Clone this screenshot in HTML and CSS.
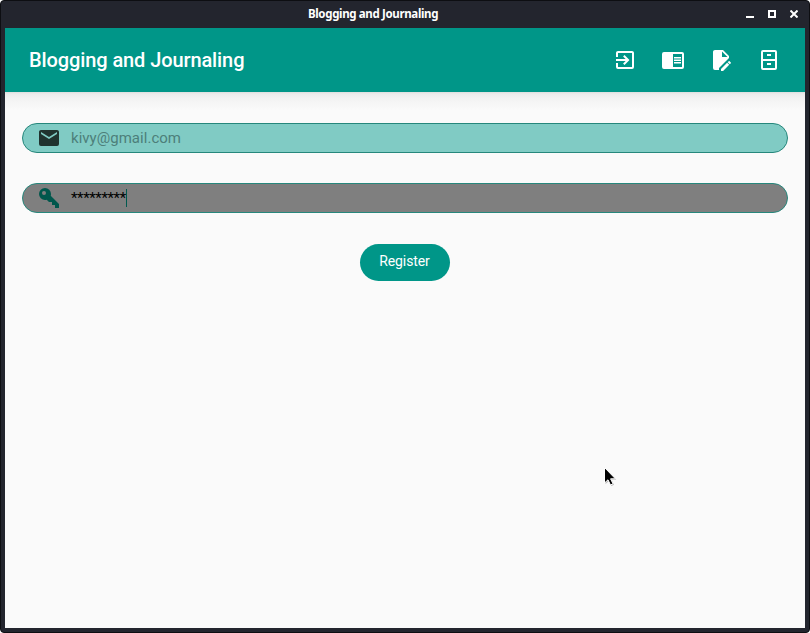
FILE: index.html
```
<!DOCTYPE html>
<html lang="en">
<head>
<meta charset="utf-8">
<title>Blogging and Journaling</title>
<link rel="stylesheet" href="styles.css">
</head>
<body>
<div class="window">
  <div class="titlebar">
    <span class="window-title">Blogging and Journaling</span>
    <div class="controls">
      <svg width="8" height="8" viewBox="0 0 8 8"><path d="M0 6h8v2H0z"/></svg>
      <svg width="8" height="8" viewBox="0 0 8 8"><path fill-rule="evenodd" d="M0 0h8v8H0zM2 2v4h4V2z"/></svg>
      <svg width="8" height="8" viewBox="0 0 8 8"><path d="M.5.5l7 7M7.5.5L.5 7.5" stroke="#fff" stroke-width="2"/></svg>
    </div>
  </div>
  <header class="toolbar">
    <h1>Blogging and Journaling</h1>
    <nav class="actions">
      <svg class="icon" viewBox="0 0 24 24"><path d="M19,3H5C3.89,3 3,3.89 3,5V9H5V5H19V19H5V15H3V19A2,2 0 0,0 5,21H19A2,2 0 0,0 21,19V5C21,3.89 20.1,3 19,3M10.08,15.58L11.5,17L16.5,12L11.5,7L10.08,8.41L12.67,11H3V13H12.67L10.08,15.58Z"/></svg>
      <svg class="icon" viewBox="0 0 24 24"><path fill-rule="evenodd" d="M3 4H21A2 2 0 0 1 23 6V19A2 2 0 0 1 21 21H3A2 2 0 0 1 1 19V6A2 2 0 0 1 3 4M12 6V19H21V6ZM13 9H20V10.5H13ZM13 11.5H20V13H13ZM13 14H20V15.5H13Z"/></svg>
      <svg class="icon" viewBox="0 0 24 24"><path d="M6,2C4.89,2 4,2.89 4,4V20A2,2 0 0,0 6,22H10V20.09L20,10.09V8L14,2H6M13,3.5L18.5,9H13V3.5M20.15,13C20,13 19.86,13.05 19.75,13.16L18.73,14.18L20.82,16.26L21.84,15.25C22.05,15.03 22.05,14.67 21.84,14.46L20.54,13.16C20.43,13.05 20.29,13 20.15,13M18.14,14.77L12,20.92V23H14.08L20.23,16.85L18.14,14.77Z"/></svg>
      <svg class="icon" viewBox="0 0 24 24"><path fill-rule="evenodd" d="M6 2H18A2 2 0 0 1 20 4V20A2 2 0 0 1 18 22H6A2 2 0 0 1 4 20V4A2 2 0 0 1 6 2M6 4V11H18V4ZM6 13V20H18V13ZM10 6H14V8H10ZM10 15H14V17H10Z"/></svg>
    </nav>
  </header>
  <main class="form">
    <div class="field email">
      <svg class="icon" viewBox="0 0 24 24"><path d="M20,8L12,13L4,8V6L12,11L20,6M20,4H4C2.89,4 2,4.89 2,6V18A2,2 0 0,0 4,20H20A2,2 0 0,0 22,18V6C22,4.89 21.1,4 20,4Z"/></svg>
      <span class="hint">kivy@gmail.com</span>
    </div>
    <div class="field password">
      <svg class="icon" viewBox="0 0 24 24"><path d="M22,19V22H18V19H15V16H12L9.74,13.74C9.19,13.91 8.61,14 8,14A6,6 0 0,1 2,8A6,6 0 0,1 8,2A6,6 0 0,1 14,8C14,8.61 13.91,9.19 13.74,9.74L22,18V19M7,5A2,2 0 0,0 5,7A2,2 0 0,0 7,9A2,2 0 0,0 9,7A2,2 0 0,0 7,5Z"/></svg>
      <span class="secret">*********</span><i class="caret"></i>
    </div>
    <button class="register">Register</button>
  </main>
  <svg class="pointer" width="14" height="22" viewBox="0 0 14 22"><path d="M2.5 2.5V18L5.9 14.9L8.5 20L11 18.8L8.6 13.8H13.2Z" fill="#777" opacity=".5"/><path d="M1.5 1.5V17L5 13.8L7.5 19L10 17.8L7.6 12.8H12.4Z" fill="#000" stroke="#fff" stroke-width="1"/></svg>
</div>
</body>
</html>
```
FILE: styles.css
```
* { box-sizing: border-box; }
body { margin: 0; background: #fff; font-family: Roboto, sans-serif; }
svg { display: block; flex: none; }
.window {
  position: relative;
  width: 810px;
  height: 633px;
  border: 1px solid #0d0e12;
  border-radius: 4px;
  background: #23252e;
  padding: 0 4px 4px;
  display: flex;
  flex-direction: column;
}
.titlebar {
  position: relative;
  height: 27px;
  flex: none;
  display: flex;
  align-items: center;
  justify-content: center;
}
.window-title {
  font: bold 11.5px/16px "Noto Sans", sans-serif;
  letter-spacing: -.35px;
  color: #fff;
  width: 130px;
  white-space: nowrap;
  margin: 0 64px 1px 0;
}
.controls {
  position: absolute;
  right: 7px;
  top: 9px;
  display: flex;
  gap: 14px;
  fill: #fff;
}
.toolbar {
  height: 64px;
  flex: none;
  background: #009688;
  display: flex;
  align-items: center;
  justify-content: space-between;
  padding: 0 24px;
}
h1 {
  margin: 0;
  font-size: 20px;
  line-height: 24px;
  font-weight: 500;
  letter-spacing: -.1px;
  color: #fff;
}
.actions { display: flex; gap: 24px; fill: #fff; }
.icon { width: 24px; height: 24px; }
.form {
  flex: 1;
  background: linear-gradient(#dedede 0, #ececec 2px, #f3f3f3 7px, #fafafa 18px);
  padding: 31px 17px 0;
  display: flex;
  flex-direction: column;
  align-items: center;
}
.field {
  width: 766px;
  height: 30px;
  flex: none;
  border: 1px solid #26877c;
  border-radius: 15px;
  display: flex;
  align-items: center;
  padding-left: 14px;
  margin-bottom: 30px;
  font-size: 15px;
  line-height: 18px;
}
.field .icon { margin-right: 10px; }
.email { background: #80cbc4; }
.email .icon { fill: #20332f; }
.hint { color: #4d7f7a; letter-spacing: .03px; }
.password { background: #7f7f7f; }
.password .icon { fill: #00574c; }
.secret { color: #000; letter-spacing: -.38px; }
.caret { width: 1px; height: 18px; background: #005a50; }
.register {
  width: 90px;
  height: 37px;
  margin-top: .5px;
  border: 0;
  border-radius: 18.5px;
  padding: 0 1px 2px 0;
  background: #009688;
  color: #fff;
  font: 14px/18px Roboto, sans-serif;
  letter-spacing: -.1px;
}
.pointer { position: absolute; left: 602px; top: 465px; }
```
